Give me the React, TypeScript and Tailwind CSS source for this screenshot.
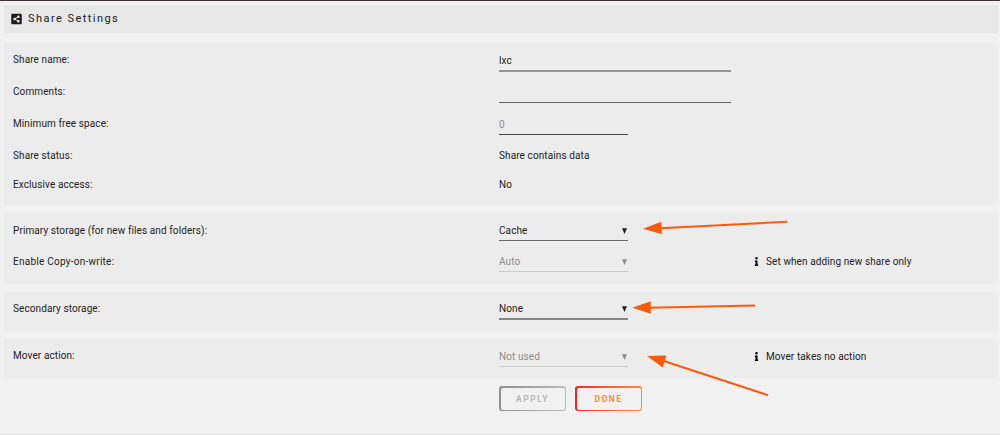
import type { ReactNode } from "react";
import { FaInfo, FaShareAltSquare } from "react-icons/fa";
import clsx from "clsx";

type RowProps = {
  label: string;
  help?: string;
  className?: string;
  children?: ReactNode;
};

function Row({ label, help, className, children }: RowProps) {
  return (
    <div className={clsx("flex pl-[9px]", className)}>
      <div className="w-[486px] h-[22px] mt-[5px] flex items-center">{label}</div>
      <div className="w-[255px] mt-[5px]">{children}</div>
      {help && (
        <div className="h-[22px] mt-[6px] flex items-center">
          <FaInfo className="w-[5px] h-[9px] mr-[7px] -mt-px text-black" />
          {help}
        </div>
      )}
    </div>
  );
}

function Panel({ className, children }: { className: string; children: ReactNode }) {
  return <div className={clsx("bg-[#ececec]", className)}>{children}</div>;
}

function Select({ value, className }: { value: string; className: string }) {
  return (
    <div className={clsx("w-[129px] pt-[2px] flex items-center justify-between", className)}>
      <span>{value}</span>
      <svg className="w-[5px] h-[6px] mr-[1px]" viewBox="0 0 5 6" fill="currentColor">
        <path d="M0 .3h5L2.5 6z" />
      </svg>
    </div>
  );
}

function Arrows() {
  return (
    <svg
      className="absolute left-0 -top-px pointer-events-none"
      width="1000"
      height="435"
      fill="#ff5a0a"
      stroke="#ff5a0a"
      strokeWidth="2"
    >
      <path d="M660 228.2L787.5 221.7" />
      <path d="M643 228.8L661.3 221.8L661.8 234.2Z" stroke="none" />
      <path d="M649 307.8L755 305.5" />
      <path d="M632.3 307.8L650.6 301.3L650.8 313.7Z" stroke="none" />
      <path d="M663 360.8L768 395.2" />
      <path d="M647 356L666.3 355.6L662.6 367.5Z" stroke="none" />
    </svg>
  );
}

function App() {
  return (
    <div className="relative w-[1000px] h-[435px] overflow-hidden bg-[#f1f1f1] border-t border-[#3a3236] font-['Roboto',sans-serif] text-[10px] leading-[14px] tracking-[0.1px] text-[#222]">
      <div className="ml-1 mr-[2px]">
        {/* Title */}
        <div className="mt-1 h-7 bg-[#e7e7e7] flex items-center pl-[7px] text-[#1c1c1c]">
          <FaShareAltSquare className="w-[11px] h-[12px] -mt-px mr-[6px]" />
          <span className="text-[11px] tracking-[1.45px]">Share Settings</span>
        </div>

        <Panel className="mt-[10px] h-[162px] pt-[1px]">
          <Row label="Share name:" className="h-8">
            <div className="w-[232px] h-[23px] pt-[2px] flex items-center border-b-2 border-[#949494]">
              lxc
            </div>
          </Row>
          <Row label="Comments:" className="h-8">
            <div className="w-[232px] h-[22px] border-b border-[#666]" />
          </Row>
          <Row label="Minimum free space:" className="h-8">
            <div className="w-[129px] h-[22px] pt-[2px] flex items-center border-b border-[#444] text-[#8c8c8c]">
              0
            </div>
          </Row>
          <Row label="Share status:" className="h-[29px]">
            <div className="h-[22px] flex items-center">Share contains data</div>
          </Row>
          <Row label="Exclusive access:" className="h-[29px]">
            <div className="h-[22px] flex items-center">No</div>
          </Row>
        </Panel>

        <Panel className="mt-2 h-[71px] pt-[1px]">
          <Row label="Primary storage (for new files and folders):" className="h-[31px] *:first:pt-[2px]">
            <Select value="Cache" className="h-[22px] border-b border-[#666]" />
          </Row>
          <Row
            label="Enable Copy-on-write:"
            help="Set when adding new share only"
            className="h-[31px] *:first:pt-[2px] *:first:tracking-[0.25px]"
          >
            <Select value="Auto" className="h-[22px] border-b border-[#ccc] text-[#8c8c8c]" />
          </Row>
        </Panel>

        <Panel className="mt-2 h-[39px]">
          <Row label="Secondary storage:" className="*:first:pt-[2px]">
            <Select value="None" className="h-[23px] border-b-2 border-[#888]" />
          </Row>
        </Panel>

        <Panel className="mt-2 h-[39px] pt-[1px]">
          <Row label="Mover action:" help="Mover takes no action">
            <Select value="Not used" className="h-[22px] border-b border-[#ccc] text-[#8c8c8c]" />
          </Row>
        </Panel>

        {/* Buttons */}
        <div className="mt-2 ml-[495px] flex gap-[9px] text-[8.5px] font-bold tracking-[1.5px]">
          <div className="w-[67px] h-[25px] rounded-[3px] p-[1.5px] bg-linear-to-r from-[#909090] to-[#bcbcbc]">
            <button className="w-full h-full rounded-[2px] bg-[#f1f1f1] text-[#b8b8b8]">APPLY</button>
          </div>
          <div className="w-[67px] h-[25px] rounded-[3px] p-[1.5px] bg-linear-to-r from-[#e22828] to-[#ff8c2f]">
            <button className="w-full h-full rounded-[2px] bg-[#f1f1f1] text-[#ff8c2f]">DONE</button>
          </div>
        </div>

        <div className="mt-[23px] -ml-1 -mr-[2px] h-px bg-[#e3e3e3]" />
      </div>
      <Arrows />
    </div>
  );
}

export default App;
